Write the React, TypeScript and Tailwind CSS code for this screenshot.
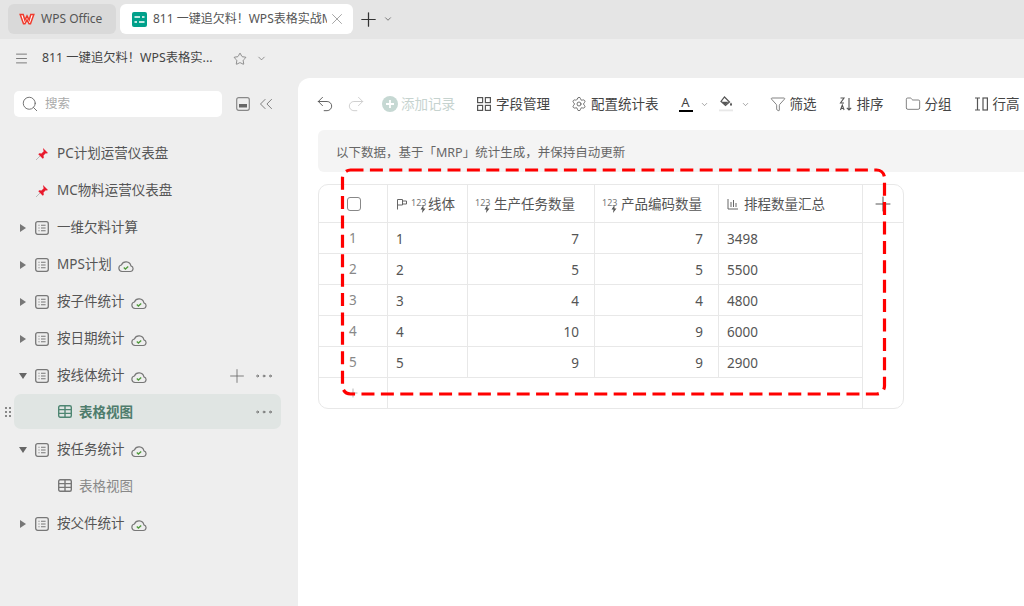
import React from "react";
import { ChevronDown, Star, Undo2, Redo2, Settings, Funnel, Folder, Plus, X, Search, ChevronsLeft, Ellipsis, Menu } from "lucide-react";

const Cloud = () => (
  <svg width="16" height="14" viewBox="0 0 16 14" fill="none" className="ml-[6px] shrink-0 mt-[2px]">
    <path d="M4 12.5h8.2a2.900 2.900 0 0 0 .7-5.700A5 5 0 0 0 3.400 6 3.300 3.300 0 0 0 4 12.500z" stroke="#777" strokeWidth="1.200" />
    <path d="M5.800 8.500l1.600 1.500 2.800-2.600" stroke="#4f9a3b" strokeWidth="1.300" />
  </svg>
);

const ListIcon = () => (
  <svg width="14" height="14" viewBox="0 0 14 14" fill="none" className="shrink-0">
    <rect x=".7" y=".7" width="12.600" height="12.600" rx="2" stroke="#777" strokeWidth="1.300" />
    <path d="M3.500 4.200h1M6 4.200h4.600M3.500 7h1M6 7h4.600M3.500 9.800h1M6 9.800h4.600" stroke="#777" strokeWidth="1.100" />
  </svg>
);

const Pin = () => (
  <svg width="14" height="14" viewBox="0 0 14 14" className="shrink-0">
    <path d="M1 13l4-4" stroke="#bbb" strokeWidth="1" />
    <path d="M8 1l5 5-1.200.6-1-.3-2.300 2.200.3 2.200-1 1L3.300 7.200l1-1 2.200.3 2.200-2.300-.3-1z" fill="#e8192c" />
  </svg>
);

const Tri = ({ open }: { open?: boolean }) => (
  <svg width="8" height="8" viewBox="0 0 8 8" className="shrink-0">
    {open ? <path d="M0 1h8L4 7z" fill="#666" /> : <path d="M1 0l6 4-6 4z" fill="#777" />}
  </svg>
);

const TableIcon = ({ color }: { color: string }) => (
  <svg width="14" height="13" viewBox="0 0 14 13" fill="none" className="shrink-0">
    <rect x=".7" y=".7" width="12.600" height="11.600" rx="1.500" stroke={color} strokeWidth="1.400" />
    <path d="M.7 4.600h12.600M.7 8.400h12.600M7 .7v11.600" stroke={color} strokeWidth="1.400" />
  </svg>
);

const SideRow = ({ kind, name, cloud, open, extra }: { kind: "pin" | "list"; name: string; cloud?: boolean; open?: boolean; extra?: boolean }) => (
  <div className="flex h-[37px] items-center text-[13.500px] text-[#555] pr-[23px]">
    {kind === "pin" ? (
      <div className="flex w-[57px] pl-[35px]"><Pin /></div>
    ) : (
      <div className="flex w-[57px] items-center pl-[19px] gap-[8px]"><Tri open={open} /><ListIcon /></div>
    )}
    <span>{name}</span>
    {cloud && <Cloud />}
    {extra && (
      <div className="ml-auto flex items-center gap-[5px]">
        <Plus size={22} strokeWidth={0.9} color="#666" />
        <Ellipsis size={22} strokeWidth={0.9} color="#666" />
      </div>
    )}
  </div>
);

const ViewRow = ({ active }: { active?: boolean }) => (
  <div className="relative flex h-[37px] items-start">
    {active && (
      <svg width="6" height="10" viewBox="0 0 6 10" className="absolute left-[5px] top-[13px]">
        <g fill="#888">
          <rect x="0" y="0" width="2" height="2" /><rect x="4" y="0" width="2" height="2" />
          <rect x="0" y="4" width="2" height="2" /><rect x="4" y="4" width="2" height="2" />
          <rect x="0" y="8" width="2" height="2" /><rect x="4" y="8" width="2" height="2" />
        </g>
      </svg>
    )}
    <div className={`ml-[14px] mr-[17px] mt-0 flex h-[35px] flex-1 items-center rounded-[7px] pl-[44px] pr-[6px] ${active ? "bg-[#e0e5e3]" : ""}`}>
      <TableIcon color={active ? "#4e8672" : "#777"} />
      <span className={`ml-[7px] pt-px text-[13.500px] ${active ? "font-bold text-[#4e7c6c]" : "text-[#888]"}`}>表格视图</span>
      {active && <Ellipsis size={22} strokeWidth={0.9} color="#666" className="ml-auto" />}
    </div>
  </div>
);

const Num = ({ gap }: { gap: string }) => (
  <span className={`relative inline-block h-[14px] w-[14px] shrink-0 text-[9px] leading-[12px] text-[#777] ${gap}`}>
    123
    <svg width="6" height="8" viewBox="0 0 6 8" className="absolute left-[9px] top-[8px]"><path d="M3.500 0L0.500 4.500h2L2 8l3.500-4.500h-2z" fill="#555" /></svg>
  </span>
);

const rowsData = [
  ["1", "1", "7", "7", "3498"],
  ["2", "2", "5", "5", "5500"],
  ["3", "3", "4", "4", "4800"],
  ["4", "4", "10", "9", "6000"],
  ["5", "5", "9", "9", "2900"],
];

const Tool = ({ icon, label, className, muted }: { icon: React.ReactNode; label: string; className?: string; muted?: boolean }) => (
  <div className={`flex items-center shrink-0 text-[13.500px] ${muted ? "text-[#c6d3cf]" : "text-[#444]"} ${className ?? ""}`}>
    {icon}
    <span>{label}</span>
  </div>
);

export default function App() {
  return (
    <div className="relative flex h-[606px] w-[1024px] flex-col overflow-hidden bg-[#eeeeee] font-['Noto_Sans','Noto_Sans_CJK_SC',sans-serif]">
      <div className="flex h-[39px] items-start bg-[#e5e5e5] pl-[8px] pt-[4px]">
        <div className="flex h-[30px] w-[108px] items-center rounded-[6px] bg-[#d9d9d9] pl-[11px] text-[12px] text-[#555]">
          <svg width="16" height="12" viewBox="0 0 16 12" fill="none" className="mr-[6px]">
            <path d="M1.200 1.500h3L5.800 7 8 2.800 10.200 7l1.600-5.500h3L11.500 10.800h-1.400L8 6.800l-2.100 4H4.500z" stroke="#ef3b2d" strokeWidth="1.500" fill="#ffffff" />
          </svg>
          WPS Office
        </div>
        <div className="ml-[4px] flex h-[30px] w-[233px] items-center rounded-[6px] bg-white pl-[12px] pr-[7px] text-[12px] text-[#555]">
          <svg width="15" height="15" viewBox="0 0 15 15" className="mr-[6px] shrink-0">
            <rect width="15" height="15" rx="2" fill="#00a08a" />
            <path d="M2.500 5h5.500M10 5h2.500M2.500 10h2.500M7 10h5.500" stroke="#fff" strokeWidth="1.600" />
          </svg>
          <span className="w-[174px] overflow-hidden whitespace-nowrap">811 一键追欠料！WPS表格实战M</span>
          <X size={18} strokeWidth={1} color="#888" className="ml-auto shrink-0" />
        </div>
        <Plus size={23} strokeWidth={1.300} color="#333" className="ml-[4px] mt-[4px]" />
        <ChevronDown size={10} strokeWidth={1.800} color="#555" className="ml-[3px] mt-[10px]" />
      </div>

      <div className="flex h-[39px] items-center pl-[14px] text-[12.300px] text-[#444]">
        <Menu size={15} strokeWidth={1.200} color="#555" />
        <span className="ml-[13px] w-[171px] whitespace-nowrap">811 一键追欠料！WPS表格实...</span>
        <Star size={14} strokeWidth={1.200} color="#666" className="ml-[20px]" />
        <ChevronDown size={11} strokeWidth={1.500} color="#666" className="ml-[9px]" />
      </div>

      <div className="flex min-h-0 flex-1">
        <aside className="w-[298px] shrink-0">
          <div className="flex items-center pl-[14px] pt-[13px]">
            <div className="flex h-[26px] w-[208px] items-center rounded-[5px] bg-white pl-[7px] text-[12.500px] text-[#aaa]">
              <Search size={18} strokeWidth={1.200} color="#666" />
              <span className="ml-[6px]">搜索</span>
            </div>
            <svg width="14" height="14" viewBox="0 0 14 14" fill="none" className="ml-[14px]">
              <rect x=".7" y=".7" width="12.600" height="12.600" rx="2" stroke="#888" strokeWidth="1.200" />
              <rect x="3" y="7" width="8" height="3.500" fill="#666" />
            </svg>
            <ChevronsLeft size={22} strokeWidth={0.9} color="#666" className="ml-[5px]" />
          </div>
          <div className="pt-[18px]">
            <SideRow kind="pin" name="PC计划运营仪表盘" />
            <SideRow kind="pin" name="MC物料运营仪表盘" />
            <SideRow kind="list" name="一维欠料计算" />
            <SideRow kind="list" name="MPS计划" cloud />
            <SideRow kind="list" name="按子件统计" cloud />
            <SideRow kind="list" name="按日期统计" cloud />
            <SideRow kind="list" name="按线体统计" cloud open extra />
            <ViewRow active />
            <SideRow kind="list" name="按任务统计" cloud open />
            <ViewRow />
            <SideRow kind="list" name="按父件统计" cloud />
          </div>
        </aside>

        <main className="min-w-0 flex-1 rounded-tl-[12px] bg-white pl-[20px]">
          <div className="flex h-[52px] items-center whitespace-nowrap">
            <Undo2 size={20} strokeWidth={1.100} color="#555" className="-ml-[3px]" />
            <Redo2 size={20} strokeWidth={1.100} color="#ccc" className="ml-[11px]" />
            <Tool
              muted
              className="ml-[16px] gap-[3px]"
              icon={
                <svg width="16" height="16" viewBox="0 0 16 16">
                  <circle cx="8" cy="8" r="8" fill="#c6d8d3" />
                  <path d="M8 4v8M4 8h8" stroke="#fff" strokeWidth="1.800" />
                </svg>
              }
              label="添加记录"
            />
            <Tool
              className="ml-[22px] gap-[5px]"
              icon={
                <svg width="14" height="14" viewBox="0 0 14 14" fill="none" stroke="#555" strokeWidth="1.200">
                  <rect x=".6" y=".6" width="5" height="5" /><rect x="8.400" y=".6" width="5" height="5" />
                  <rect x=".6" y="8.400" width="5" height="5" /><rect x="8.400" y="8.400" width="5" height="5" />
                </svg>
              }
              label="字段管理"
            />
            <Tool className="ml-[21px] gap-[4px]" icon={<Settings size={16} strokeWidth={1.200} color="#555" />} label="配置统计表" />
            <div className="ml-[20px] flex h-[16px] w-[14px] flex-col items-center text-[13px] leading-[13px] text-[#444]">
              A<span className="mt-auto block h-[2px] w-[14px] bg-black" />
            </div>
            <ChevronDown size={9} strokeWidth={1.500} color="#666" className="ml-[7px]" />
            <svg width="14" height="16" viewBox="0 0 14 16" fill="none" className="ml-[10px]">
              <path d="M5.500 1l5 5-4 3.500-4.500-4z" stroke="#555" strokeWidth="1.200" />
              <path d="M2.500 5.800h7L6.500 9z" fill="#555" />
              <path d="M12 6.500c.8 1.200 1 1.700 1 2.200a1 1 0 0 1-2 0c0-.5.2-1 1-2.200z" fill="#555" />
              <rect x="0" y="13.500" width="14" height="1.800" fill="#e8e8e8" />
            </svg>
            <ChevronDown size={9} strokeWidth={1.500} color="#666" className="ml-[8px]" />
            <Tool className="ml-[20px] gap-[4px]" icon={<Funnel size={16} strokeWidth={1.100} color="#555" />} label="筛选" />
            <Tool
              className="ml-[22px] gap-[5px]"
              icon={
                <svg width="13" height="14" viewBox="0 0 13 14" fill="none" stroke="#555" strokeWidth="1.100">
                  <path d="M1.500 1h3.500L1.500 6h3.500M1.500 13l1.800-5 1.800 5M2.100 11.500h2.400M10 1v12M7.800 10.800L10 13l2.200-2.200" />
                </svg>
              }
              label="排序"
            />
            <Tool className="ml-[21px] gap-[4px]" icon={<Folder size={16} strokeWidth={1.100} color="#555" />} label="分组" />
            <Tool
              className="ml-[23px] gap-[5px]"
              icon={
                <svg width="13" height="14" viewBox="0 0 13 14" fill="none" stroke="#555" strokeWidth="1.200">
                  <path d="M0 1h5M0 13h5M2.500 1v12" /><rect x="8" y="1" width="4.400" height="12" />
                </svg>
              }
              label="行高"
            />
          </div>

          <div className="flex h-[42px] items-center rounded-l-[6px] bg-[#f4f4f4] pl-[18px] pt-[4px] text-[12.500px] text-[#666]">
            以下数据，基于「MRP」统计生成，并保持自动更新
          </div>

          <div className="mt-[12px] w-[586px] overflow-hidden rounded-[10px] border border-[#e8e8e8] text-[13.500px] text-[#555]">
            <div className="grid h-[38px] grid-cols-[69px_80px_127px_124px_144px_40px] border-b border-[#e8e8e8]">
              <div className="flex items-center justify-center border-r border-[#e8e8e8] pl-[1px]">
                <span className="block h-[14px] w-[14px] rounded-[3px] border border-[#888]" />
              </div>
              <div className="flex items-center border-r border-[#e8e8e8] pl-[8px] pt-px">
                <svg width="12" height="12" viewBox="0 0 12 12" fill="none" stroke="#666" className="mr-[3px] shrink-0">
                  <path d="M1.500 11.500V1.500h5v5.500h-5M6.500 3h4v3h-4" />
                </svg>
                <Num gap="mr-[3px]" />
                线体
              </div>
              <div className="flex items-center border-r border-[#e8e8e8] pl-[7px] pt-px"><Num gap="mr-[5px]" />生产任务数量</div>
              <div className="flex items-center border-r border-[#e8e8e8] pl-[7px] pt-px"><Num gap="mr-[5px]" />产品编码数量</div>
              <div className="flex items-center border-r border-[#e8e8e8] pl-[8px] pt-px">
                <svg width="12" height="12" viewBox="0 0 12 12" fill="none" stroke="#666" className="mr-[5px] shrink-0">
                  <path d="M1 1v10h10M4 4v5M6.500 2v7M9 5v4" />
                </svg>
                排程数量汇总
              </div>
              <div className="flex items-center justify-center">
                <Plus size={24} strokeWidth={0.9} color="#444" />
              </div>
            </div>
            {rowsData.map((r) => (
              <div key={r[0]} className="grid h-[31px] grid-cols-[69px_80px_127px_124px_144px_40px]">
                <div className="flex items-center border-r border-b border-[#e8e8e8] pl-[30px] pt-px text-[#888]">{r[0]}</div>
                <div className="flex items-center border-r border-b border-[#e8e8e8] pl-[8px] pt-[3px]">{r[1]}</div>
                <div className="flex items-center justify-end border-r border-b border-[#e8e8e8] pr-[15px] pt-[3px]">{r[2]}</div>
                <div className="flex items-center justify-end border-r border-b border-[#e8e8e8] pr-[15px] pt-[3px]">{r[3]}</div>
                <div className="flex items-center border-r border-b border-[#e8e8e8] pl-[8px] pt-[3px]">{r[4]}</div>
                <div className="" />
              </div>
            ))}
            <div className="grid h-[30px] grid-cols-[69px_331px_144px_40px]">
              <div className="flex items-center border-r border-[#e8e8e8] pl-[27px]">
                <Plus size={14} strokeWidth={1} color="#888" />
              </div>
              <div className="col-span-2 border-r border-[#e8e8e8]" />
            </div>
          </div>
        </main>
      </div>

      <svg width="552" height="234" viewBox="0 0 552 234" fill="none" className="absolute left-[338px] top-[166px]">
        <rect x="4.500" y="4" width="542" height="224" rx="8" stroke="#ff0000" strokeWidth="3.200" strokeDasharray="13 6.400" strokeLinecap="butt" />
      </svg>
    </div>
  );
}
